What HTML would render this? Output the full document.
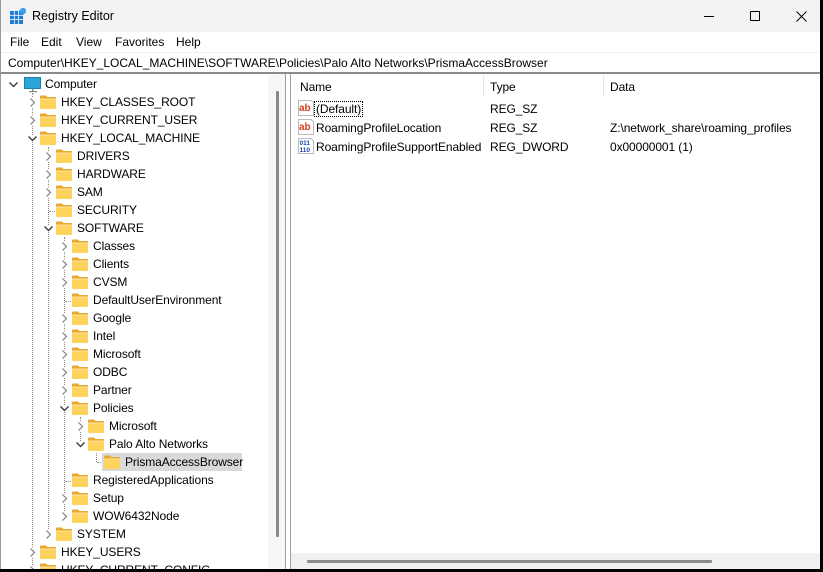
<!DOCTYPE html>
<html><head><meta charset="utf-8"><style>
*{margin:0;padding:0;box-sizing:border-box}
body{width:823px;height:572px;overflow:hidden;background:#000;font-family:"Liberation Sans",sans-serif;font-size:12px;color:#000;position:relative}
.win{position:absolute;left:0;top:0;width:820px;height:569px;background:#fff;border-left:1px solid #9a9a9a;overflow:hidden}
.title{position:absolute;left:0;top:0;width:820px;height:32px;background:#f3f3f3}
.menu{position:absolute;left:0;top:32px;width:820px;height:20px;background:#fff}
.menu span{position:absolute;top:3px;font-size:12px}
.addr{position:absolute;left:0;top:52px;width:820px;height:20px;background:#fff;border-top:1px solid #f0f0f0}
.sep{position:absolute;left:0;top:72px;width:820px;height:2px;background:#8a8a8a}
.row{position:absolute;height:18px;white-space:nowrap}
.t{position:absolute;top:2px;font-size:12px;letter-spacing:-0.1px}
.fold{position:absolute;width:16px;height:14px;top:2px}
.sel{position:absolute;background:#d9d9d9}
.dv{position:absolute;border-left:1px dotted #8a8a8a;width:0}
.dh{position:absolute;border-top:1px dotted #8a8a8a;height:0}
.lt{position:absolute;font-size:12px;letter-spacing:-0.1px}
</style></head><body>
<div class="win">
<div class="title">
<svg style="position:absolute;left:9px;top:8px" width="16" height="16" viewBox="0 0 16 16">
<rect x="0" y="3" width="13" height="13" fill="#1f7bd1"/>
<g stroke="#fff" stroke-width="0.8"><line x1="4.3" y1="3" x2="4.3" y2="16"/><line x1="8.6" y1="3" x2="8.6" y2="16"/><line x1="0" y1="7.3" x2="13" y2="7.3"/><line x1="0" y1="11.6" x2="13" y2="11.6"/></g>
<rect x="10" y="0" width="6" height="6" fill="#3aa0e8" transform="rotate(45 13 3)"/>
</svg>
<span style="position:absolute;left:31px;top:9px;font-size:12.5px">Registry Editor</span>
<div style="position:absolute;left:703px;top:16px;width:10px;height:1px;background:#000"></div>
<div style="position:absolute;left:749px;top:11px;width:10px;height:10px;border:1px solid #000;border-radius:1px"></div>
<svg style="position:absolute;left:795px;top:11px" width="11" height="11"><path d="M0.5 0.5L10.5 10.5M10.5 0.5L0.5 10.5" stroke="#000" stroke-width="1"/></svg>
</div>
<div class="menu">
<span style="left:9px">File</span><span style="left:40px">Edit</span><span style="left:75px">View</span><span style="left:114px">Favorites</span><span style="left:175px">Help</span>
</div>
<div class="addr"><span style="position:absolute;left:7px;top:3px">Computer\HKEY_LOCAL_MACHINE\SOFTWARE\Policies\Palo Alto Networks\PrismaAccessBrowser</span></div>
<div class="sep"></div>

<div style="position:absolute;left:267px;top:74px;width:17px;height:495px;background:#f7f7f7"></div>
<div style="position:absolute;left:275px;top:91px;width:3px;height:446px;background:#8a8a8a;border-radius:1px"></div>
<div style="position:absolute;left:284px;top:74px;width:1px;height:495px;background:#a0a0a0"></div>
<div style="position:absolute;left:289px;top:74px;width:1px;height:495px;background:#a0a0a0"></div>

<div class="dv" style="left:31px;top:93px;height:478px"></div>
<div class="dv" style="left:47px;top:147px;height:388px"></div>
<div class="dh" style="left:48px;top:211px;width:6px"></div>
<div class="dv" style="left:63px;top:237px;height:280px"></div>
<div class="dh" style="left:64px;top:301px;width:6px"></div>
<div class="dh" style="left:64px;top:481px;width:6px"></div>
<div class="dv" style="left:79px;top:417px;height:28px"></div>
<div class="dv" style="left:95px;top:453px;height:9px"></div>
<div class="dh" style="left:96px;top:462px;width:6px"></div>

<div class="sel" style="left:101px;top:453px;width:140px;height:18px"></div>

<div id="tree"></div>

<div style="position:absolute;left:482px;top:76px;width:1px;height:21px;background:#e5e5e5"></div>
<div style="position:absolute;left:602px;top:76px;width:1px;height:21px;background:#e5e5e5"></div>
<span class="lt" style="left:299px;top:80px">Name</span>
<span class="lt" style="left:489px;top:80px">Type</span>
<span class="lt" style="left:609px;top:80px">Data</span>

<svg style="position:absolute;left:297px;top:100px" width="16" height="16" viewBox="0 0 16 16"><path d="M0.5 0.5H13L15.5 3V15.5H0.5Z" fill="#fff" stroke="#bbb"/><text x="1" y="11" font-family="Liberation Sans" font-weight="bold" font-size="10" fill="#d2411e">ab</text></svg>
<span class="lt" style="left:313px;top:101px;border:1px dotted #000;padding:0 1px">(Default)</span>
<span class="lt" style="left:489px;top:102px">REG_SZ</span>

<svg style="position:absolute;left:297px;top:119px" width="16" height="16" viewBox="0 0 16 16"><path d="M0.5 0.5H13L15.5 3V15.5H0.5Z" fill="#fff" stroke="#bbb"/><text x="1" y="11" font-family="Liberation Sans" font-weight="bold" font-size="10" fill="#d2411e">ab</text></svg>
<span class="lt" style="left:315px;top:121px">RoamingProfileLocation</span>
<span class="lt" style="left:489px;top:121px">REG_SZ</span>
<span class="lt" style="left:609px;top:121px">Z:\network_share\roaming_profiles</span>

<svg style="position:absolute;left:297px;top:138px" width="16" height="16" viewBox="0 0 16 16"><path d="M0.5 0.5H13L15.5 3V15.5H0.5Z" fill="#fff" stroke="#bbb"/><text x="1.5" y="7" font-family="Liberation Sans" font-weight="bold" font-size="6.5" fill="#1a3fb0">011</text><text x="1.5" y="14" font-family="Liberation Sans" font-weight="bold" font-size="6.5" fill="#1a3fb0">110</text></svg>
<span class="lt" style="left:315px;top:140px">RoamingProfileSupportEnabled</span>
<span class="lt" style="left:489px;top:140px">REG_DWORD</span>
<span class="lt" style="left:609px;top:140px">0x00000001 (1)</span>

<div style="position:absolute;left:290px;top:553px;width:530px;height:16px;background:#f0f0f0"></div>
<div style="position:absolute;left:306px;top:560px;width:405px;height:3px;background:#8a8a8a;border-radius:1px"></div>
</div>
<script>
var rows=[[0,"Computer","d"],[1,"HKEY_CLASSES_ROOT","r"],[1,"HKEY_CURRENT_USER","r"],[1,"HKEY_LOCAL_MACHINE","d"],
[2,"DRIVERS","r"],[2,"HARDWARE","r"],[2,"SAM","r"],[2,"SECURITY","n"],[2,"SOFTWARE","d"],
[3,"Classes","r"],[3,"Clients","r"],[3,"CVSM","r"],[3,"DefaultUserEnvironment","n"],[3,"Google","r"],[3,"Intel","r"],[3,"Microsoft","r"],[3,"ODBC","r"],[3,"Partner","r"],[3,"Policies","d"],
[4,"Microsoft","r"],[4,"Palo Alto Networks","d"],[5,"PrismaAccessBrowser","n"],
[3,"RegisteredApplications","n"],[3,"Setup","r"],[3,"WOW6432Node","r"],[2,"SYSTEM","r"],[1,"HKEY_USERS","r"],[1,"HKEY_CURRENT_CONFIG","r"]];
var h="";
rows.forEach(function(r,i){
 var L=r[0],top=75+18*i,fx,cx,tx;
 if(L==0){fx=23;cx=12;tx=44;}else{fx=39+16*(L-1);cx=31+16*(L-1);tx=fx+21;}
 h+='<div class="row" style="left:0;top:'+top+'px;width:266px">';
 if(r[2]=="r")h+='<svg style="position:absolute;left:'+(cx-3)+'px;top:5px;background:#fff" width="7" height="9"><path d="M1.5 0.5L5.5 4.5L1.5 8.5" fill="none" stroke="#808080" stroke-width="1.2"/></svg>';
 if(r[2]=="d")h+='<svg style="position:absolute;left:'+(cx-4)+'px;top:6px;background:#fff" width="9" height="7"><path d="M0.5 1.5L4.5 5.5L8.5 1.5" fill="none" stroke="#333" stroke-width="1.3"/></svg>';
 if(L==0)h+='<svg style="position:absolute;left:23px;top:2px" width="18" height="16"><rect x="0.5" y="0.5" width="16" height="11" fill="#2aa6d9" stroke="#1b7fb0"/><rect x="8" y="12" width="1.5" height="2" fill="#888"/><rect x="5" y="14" width="8" height="1.2" fill="#888"/></svg>';
 else h+='<svg class="fold" style="left:'+fx+'px" width="16" height="14"><path d="M0 1.5Q0 0.5 1 0.5H6L7.5 2H15Q16 2 16 3V4H0Z" fill="#e8a830"/><rect x="0" y="3.5" width="16" height="10.5" rx="1" fill="#fcd35c"/><rect x="0" y="3.5" width="16" height="1" fill="#fde49a"/></svg>';
 h+='<span class="t" style="left:'+tx+'px">'+r[1]+'</span></div>';
});
document.getElementById("tree").innerHTML=h;
</script>
</body></html>
